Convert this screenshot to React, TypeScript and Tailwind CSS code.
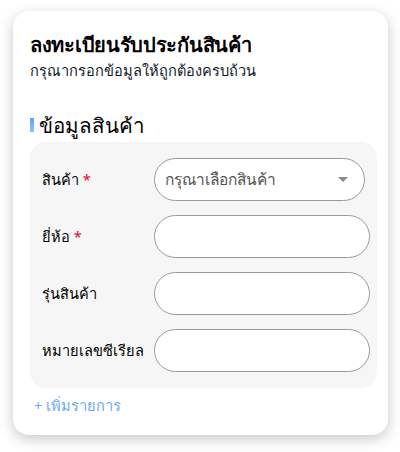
const rows = [
  { label: 'ยี่ห้อ', required: true },
  { label: 'รุ่นสินค้า', required: false },
  { label: 'หมายเลขซีเรียล', required: false },
];

export default function App() {
  return (
    <div className="w-[400px] h-[452px] bg-white pt-[11px] px-[13px]" style={{ fontFamily: '"Noto Sans", sans-serif' }}>
      <div className="w-[375px] h-[424px] bg-white rounded-[16px] shadow-[0_4px_14px_rgba(0,0,0,0.22)] pt-[20px] pl-[17px] pr-[11px]">
        <h1 className="text-[20px] font-bold leading-[28px] text-black tracking-[-0.3px]">ลงทะเบียนรับประกันสินค้า</h1>
        <p className="text-[14.6px] leading-[20px] text-gray-900 mt-[1px]">กรุณากรอกข้อมูลให้ถูกต้องครบถ้วน</p>

        <div className="flex items-center gap-[5px] mt-[31px]">
          <span className="w-[4px] h-[14px] bg-gradient-to-b from-[#5ea4f5] to-[#8ec2ff]" />
          <h2 className="text-[20.5px] font-medium leading-[28px] text-black">ข้อมูลสินค้า</h2>
        </div>

        <div className="mt-[3px] bg-[#f6f6f6] rounded-[16px] pl-[12px] pr-[7px] pt-[16px] pb-[16px] flex flex-col gap-[14px]">
          <div className="flex items-center">
            <label className="w-[112px] shrink-0 text-[14.6px] font-medium text-black">
              สินค้า <span className="text-[#e11d48]">*</span>
            </label>
            <div className="w-[211px] shrink-0 h-[43px] rounded-full border border-[#9a9a9a] bg-white flex items-center justify-between pl-[10px] pr-[16px]">
              <span className="text-[15.5px] text-[#555]">กรุณาเลือกสินค้า</span>
              <svg width="10" height="5" viewBox="0 0 10 5"><path d="M0 0h10L5 5z" fill="#8a8a8a" /></svg>
            </div>
          </div>
          {rows.map((r) => (
            <div key={r.label} className="flex items-center">
              <label className="w-[112px] shrink-0 text-[14.6px] font-medium text-black whitespace-nowrap">
                {r.label}
                {r.required && <span className="text-[#e11d48]"> *</span>}
              </label>
              <input className="w-[216px] shrink-0 h-[43px] rounded-full border border-[#9a9a9a] bg-white px-[12px] outline-none" />
            </div>
          ))}
        </div>

        <button className="mt-[7px] ml-[4px] text-[14.6px] text-[#6aa8f5]">+ เพิ่มรายการ</button>
      </div>
    </div>
  );
}
